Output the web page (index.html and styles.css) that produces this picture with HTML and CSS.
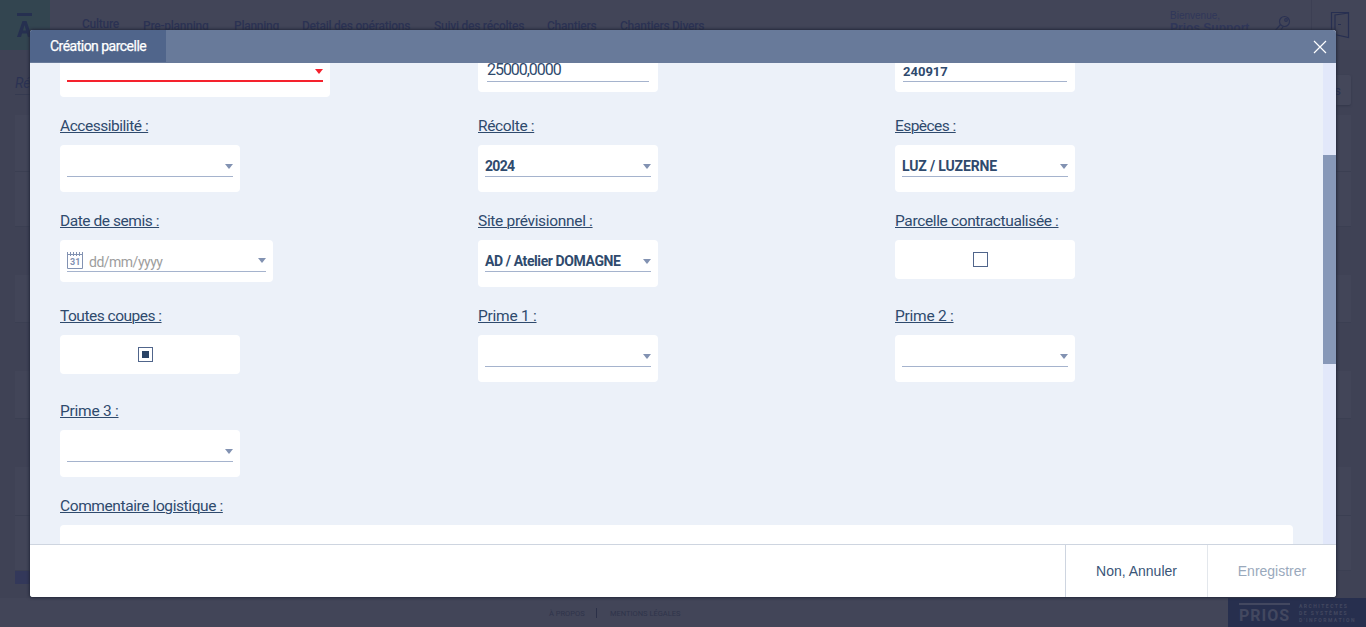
FILE: index.html
```html
<!DOCTYPE html>
<html lang="fr">
<head>
<meta charset="utf-8">
<title>Création parcelle</title>
<link rel="stylesheet" href="styles.css">
</head>
<body>
<div class="page">
  <header class="topbar">
    <div class="brand"><svg width="50" height="50" viewBox="0 0 50 50"><path d="M17 13h15v3H17z" fill="#263050"/><path fill-rule="evenodd" d="M17 37 22.500 21h4L32 37h-4l-1-3.500h-5L21 37zM23 30.500h3l-1.500-5.500z" fill="#263050"/></svg></div>
    <nav class="nav">
      <a class="nav-item nav-active">Culture</a><a class="nav-item n2">Pre-planning</a><a class="nav-item n3">Planning</a><a class="nav-item n4">Detail des opérations</a><a class="nav-item n5">Suivi des récoltes</a><a class="nav-item n6">Chantiers</a><a class="nav-item n7">Chantiers Divers</a>
    </nav>
    <div class="user"><span>Bienvenue,</span><b>Prios Support</b></div>
    <svg class="key" width="20" height="22" viewBox="0 0 20 22" fill="none" stroke="#2b3253" stroke-width="1.200"><circle cx="12.500" cy="6.500" r="5"/><circle cx="14" cy="5" r="1.300"/><path d="M8.500 9.500 2 17v3h3l6-8"/></svg>
    <div class="exit"><svg width="20" height="28" viewBox="0 0 20 28" fill="none" stroke="#272f51" stroke-width="1.200"><path d="M4 25H1.500V1.500H18.500v25L5 23.500V4L18.500 2M8 13.500h3"/></svg></div>
  </header>
  <main class="content">
    <div class="search-row"><span class="search">Référence</span><span class="more">s</span></div>
    <div class="panel tall"><i></i></div>
    <div class="panel"></div>
    <div class="panel"></div>
    <div class="panel last"><i></i></div>
    <div class="strip"></div>
  </main>
  <footer class="bottom">
    <span class="about">À PROPOS</span><span class="sep"></span><span class="legal">MENTIONS LÉGALES</span>
    <div class="prios"><b>PRIOS</b><span>ARCHITECTES<br>DE SYSTÈMES<br>D'INFORMATION</span></div>
  </footer>
</div>

<section class="modal">
  <header class="modal-head">
    <h1 class="tab">Création parcelle</h1>
    <svg class="close" width="14" height="14" viewBox="0 0 14 14" stroke="#fff" stroke-width="1.200"><path d="M1 1l12 12M13 1L1 13"/></svg>
  </header>
  <div class="modal-body">
    <div class="form">
      <div class="field"><div class="label"></div><div class="box select wide required"><div class="line"><i class="arrow"></i></div></div></div>
      <div class="field"><div class="label"></div><div class="box input number"><div class="line">25000,0000</div></div></div>
      <div class="field"><div class="label"></div><div class="box input code"><div class="line">240917</div></div></div>

      <div class="field"><label class="label l-acc">Accessibilité :</label><div class="box select"><div class="line"><i class="arrow"></i></div></div></div>
      <div class="field"><label class="label l-rec">Récolte :</label><div class="box select"><div class="line"><span class="v-year">2024</span><i class="arrow"></i></div></div></div>
      <div class="field"><label class="label l-esp">Espèces :</label><div class="box select"><div class="line"><span class="v-luz">LUZ / LUZERNE</span><i class="arrow"></i></div></div></div>

      <div class="field"><label class="label l-date">Date de semis :</label><div class="box date"><div class="line"><svg class="cal" width="16" height="18" viewBox="0 0 16 18" fill="none" stroke="#8292b2"><path d="M.5 0v16.500h15V0M0 2.500h16M3.500 0v4M6.500 0v4M9.500 0v4M12.500 0v4"/><text x="8.200" y="13" text-anchor="middle" class="cal-num">31</text></svg><span class="hint">dd/mm/yyyy</span><i class="arrow"></i></div></div></div>
      <div class="field"><label class="label l-site">Site prévisionnel :</label><div class="box select"><div class="line"><span class="v-site">AD / Atelier DOMAGNE</span><i class="arrow"></i></div></div></div>
      <div class="field"><label class="label l-parc">Parcelle contractualisée :</label><div class="box check"><span class="tick"></span></div></div>

      <div class="field"><label class="label l-tout">Toutes coupes :</label><div class="box check"><span class="tick on"></span></div></div>
      <div class="field"><label class="label l-prime">Prime 1 :</label><div class="box select"><div class="line"><i class="arrow"></i></div></div></div>
      <div class="field"><label class="label l-prime">Prime 2 :</label><div class="box select"><div class="line"><i class="arrow"></i></div></div></div>

      <div class="field full"><label class="label l-prime">Prime 3 :</label><div class="box select"><div class="line"><i class="arrow"></i></div></div></div>
      <div class="field full"><label class="label l-com">Commentaire logistique :</label><div class="box area"></div></div>
    </div>
    <div class="scroll"><div class="thumb"></div></div>
  </div>
  <footer class="modal-foot">
    <button class="btn cancel">Non, Annuler</button>
    <button class="btn save">Enregistrer</button>
  </footer>
</section>
</body>
</html>
```
FILE: styles.css
```css
* { box-sizing: border-box; }
body { margin: 0; height: 627px; overflow: hidden; position: relative; font-family: Roboto, "Liberation Sans", sans-serif; color: #2f4a6d; }
svg { display: block; flex: none; }

/* dimmed page */
.page { height: 627px; display: flex; flex-direction: column; background: #3f4255; color: #2b3253; }
.topbar { height: 50px; display: flex; background: #424558; flex: none; }
.brand { width: 50px; background: #334550; }
.nav { display: flex; flex: 1; padding: 19px 0 0 32px; font-size: 12px; line-height: 15px; font-weight: 500; white-space: nowrap; letter-spacing: -.25px; }
.nav-active { width: 61px; margin-top: -2px; }
.nav .n2 { width: 91px; }
.nav .n3 { width: 68px; }
.nav .n4 { width: 132px; }
.nav .n5 { width: 113px; }
.nav .n6 { width: 73px; }
.user { width: 102px; padding-top: 9px; font: 10px/13px "Liberation Sans", sans-serif; display: flex; flex-direction: column; color: #30375a; }
.user b { font-size: 12px; white-space: nowrap; }
.key { margin-top: 15px; margin-right: 19px; }
.exit { width: 55px; border-left: 1px solid #3c3f53; padding: 11px 0 0 18px; }
.content { flex: none; height: 548px; padding: 0 15px; }
.search-row { height: 65px; display: flex; justify-content: space-between; padding-top: 25px; }
.search { height: 20px; width: 200px; border-bottom: 1px solid #353a50; font-style: italic; font-size: 14px; line-height: 17px; }
.more { width: 60px; height: 30px; background: #44475a; border-radius: 2px; box-shadow: 0 1px 2px #34384b; text-align: right; padding-right: 10px; font-size: 13px; line-height: 31px; }
.panel { height: 48px; margin-bottom: 48px; background: #424558; border-bottom: 1px solid #3b3f52; }
.panel i { display: block; height: 57px; border-bottom: 1px solid #3b3f52; }
.panel.tall { height: 112px; }
.panel.last { height: 104px; margin: 0; }
.panel.last i { height: 49px; }
.strip { width: 400px; height: 13px; background: #33385a; }
.bottom { height: 29px; background: #424558; display: flex; padding: 11px 0 0 549px; font-size: 7.500px; line-height: 10px; color: #2f344b; position: relative; }
.about { width: 47px; }
.sep { width: 14px; height: 10px; border-left: 1px solid #2b3048; margin-top: -1px; }
.prios { position: absolute; right: 0; top: 0; width: 138px; height: 29px; background: #272f4e; color: #434860; display: flex; padding: 5px 0 0 11px; }
.prios b { width: 51px; height: 22px; border-top: 2px solid #434860; font-size: 16px; line-height: 22px; letter-spacing: 1px; }
.prios span { margin-left: 9px; font-size: 5px; line-height: 7px; letter-spacing: 1.500px; font-weight: 700; white-space: nowrap; }

/* dialog */
.modal { position: absolute; left: 30px; top: 30px; width: 1306px; height: 567px; border-radius: 3px; overflow: hidden; background: #fff; display: flex; flex-direction: column; box-shadow: 0 0 3px 1px #23283a; }
.modal-head { height: 33px; flex: none; background: #687a9a; display: flex; justify-content: space-between; }
.tab { margin: 0; width: 136px; height: 32px; background: #50658b; color: #fff; font-size: 14px; line-height: 33px; font-weight: 400; padding-left: 20px; letter-spacing: -.52px; -webkit-text-stroke: .25px #fff; white-space: nowrap; }
.close { margin: 10px 9px 0 0; }
.modal-body { height: 481px; flex: none; overflow: hidden; display: flex; background: #ecf1f9; }
.form { flex: 1; margin-top: -43px; padding-left: 30px; display: grid; grid-template-columns: 418px 417px 1fr; grid-auto-rows: 95px; }
.field.full { grid-column: 1 / -1; }
.label { display: block; width: max-content; height: 30px; font-size: 15.500px; line-height: 22px; text-decoration: underline; text-decoration-thickness: 1px; text-underline-offset: 1px; white-space: nowrap; }
.l-acc { letter-spacing: -.47px; }
.l-rec { letter-spacing: -.35px; }
.l-esp { letter-spacing: -.55px; }
.l-date { letter-spacing: -.44px; }
.l-site { letter-spacing: -.32px; }
.l-parc { letter-spacing: -.36px; }
.l-tout { letter-spacing: -.5px; }
.l-prime { letter-spacing: -.25px; }
.l-com { letter-spacing: -.4px; }
.box { width: 180px; height: 47px; background: #fff; border-radius: 4px; padding: 0 7px; }
.line { height: 32px; border-bottom: 1px solid #a5b3cd; display: flex; font-size: 14px; font-weight: 700; line-height: 42px; white-space: nowrap; }
.v-year { letter-spacing: -.7px; }
.v-luz { letter-spacing: -.15px; }
.v-site { letter-spacing: -.4px; }
.arrow { margin: 19px 0 0 auto; width: 8px; height: 5px; background: #8292b2; clip-path: polygon(0 0, 100% 0, 50% 100%); }
.wide { width: 270px; }
.required .line { border-bottom: 2px solid #f5222d; }
.required .arrow { background: #f5222d; }
.input, .date { height: 42px; }
.number { padding: 0 9px; }
.number .line { font-size: 16px; line-height: 40px; font-weight: 400; letter-spacing: -1.050px; }
.code { padding: 0 8px; }
.code .line { font-size: 13px; line-height: 43px; }
.date { width: 213px; }
.date .line { font-weight: 400; }
.date .arrow { margin-top: 18px; }
.cal { margin-top: 12px; }
.cal-num { font: 700 9px Roboto, sans-serif; fill: #8292b2; stroke: none; }
.hint { margin-left: 6px; line-height: 45px; color: #9d9d9d; letter-spacing: -.5px; }
.check { height: 39px; padding-top: 12px; }
.tick { display: block; width: 15px; height: 15px; border: 1px solid #50658b; margin-left: 78px; }
.check { padding-left: 0; }
.tick.on { background: #2a4365; box-shadow: inset 0 0 0 3px #fff; }
.area { width: 1233px; height: 80px; }
.scroll { width: 13px; background: #e2e8fa; padding-top: 92px; }
.thumb { height: 209px; background: #8798b8; }
.modal-foot { height: 53px; border-top: 1px solid #ced5e0; display: flex; justify-content: flex-end; background: #fff; }
.btn { border: 0; border-left: 1px solid #ced5e0; background: none; padding: 0; font: 14px "Liberation Sans", sans-serif; color: #3a5578; }
.cancel { width: 142px; }
.save { width: 129px; border-color: #e3e7ec; color: #9aa9bc; }
```
